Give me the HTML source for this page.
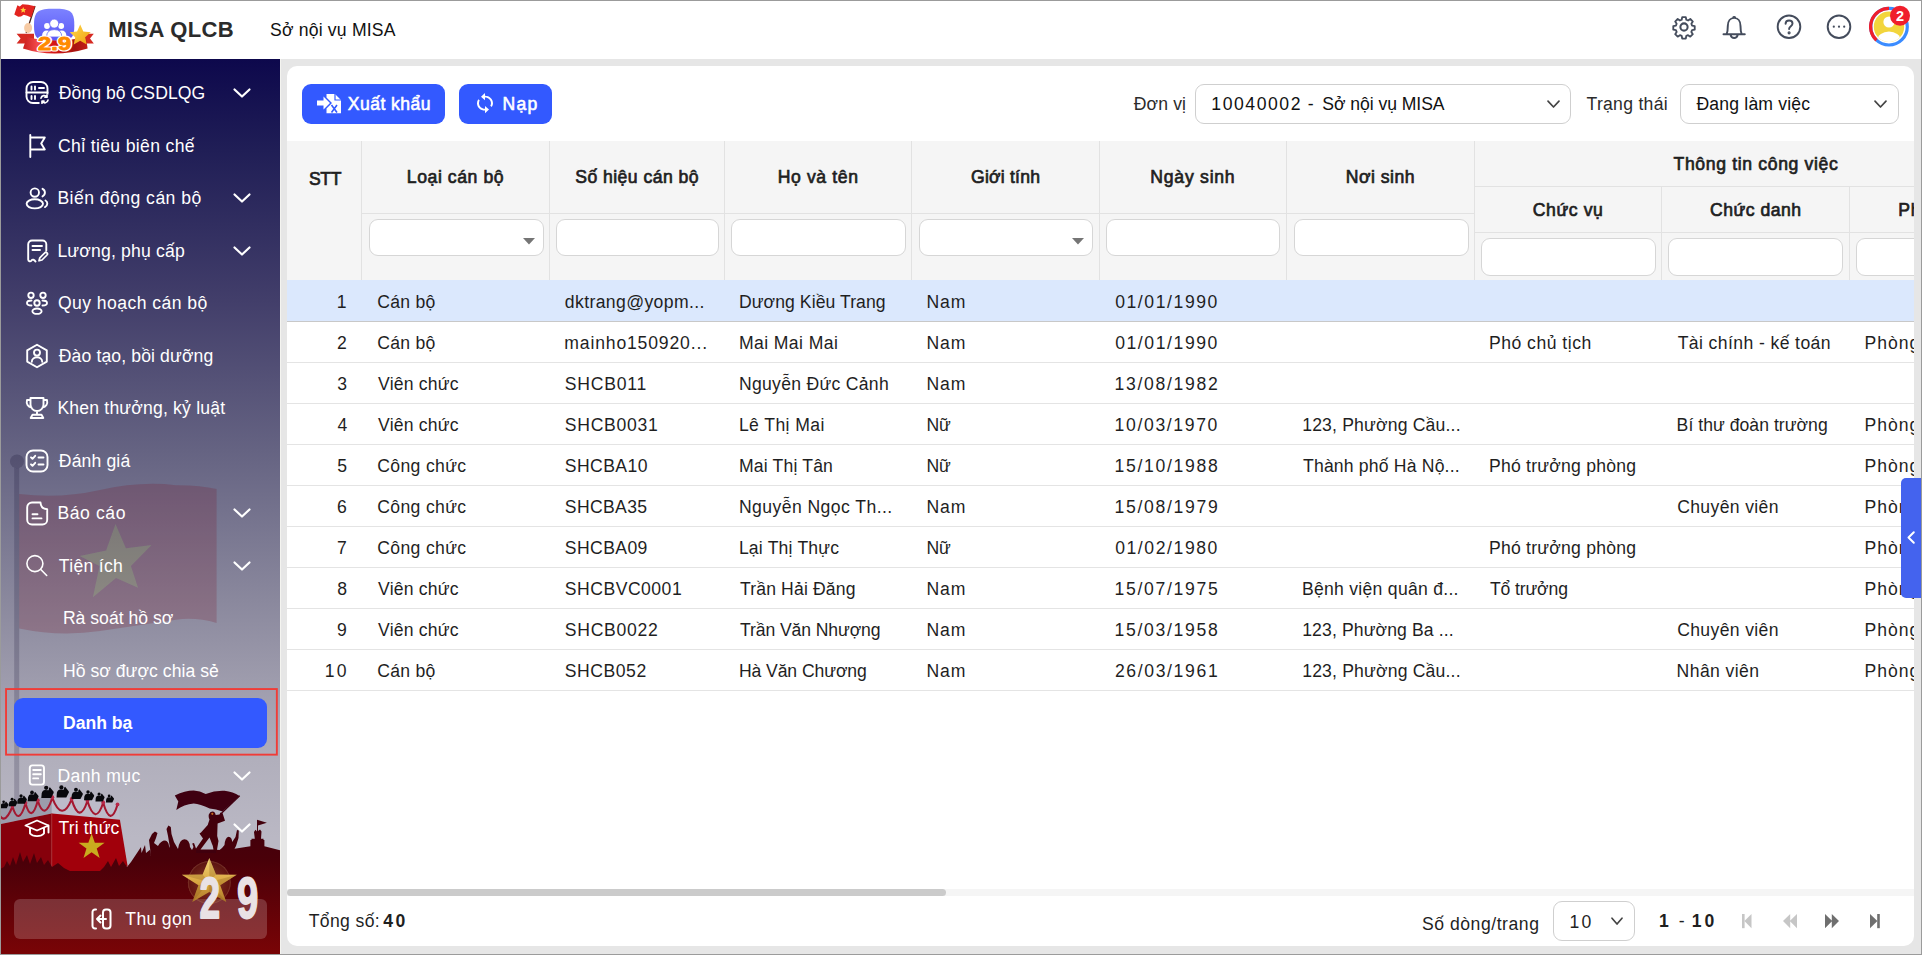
<!DOCTYPE html>
<html lang="vi">
<head>
<meta charset="utf-8">
<title>MISA QLCB</title>
<style>
*{box-sizing:border-box;margin:0;padding:0}
html,body{width:1922px;height:955px;overflow:hidden;background:#e6e6e6}
body{font-family:"Liberation Sans",sans-serif;color:#1f1f1f;position:relative;font-size:17.6px}
#frame{position:absolute;left:0;top:0;width:1922px;height:955px;border:1px solid #9b9b9b;z-index:50;pointer-events:none}
#hdr{position:absolute;left:1px;top:1px;width:1920px;height:58px;background:#fff}
#side{position:absolute;left:1px;top:59px;width:279px;height:895px;overflow:hidden;
 background:linear-gradient(180deg,#0d084c 0%,#201e56 10.17%,#423e6a 26.93%,#656382 43.69%,#8a889d 60.45%,#b1afbc 78.32%,#bab8c4 87%)}
#sline{position:absolute;left:280px;top:59px;width:1px;height:895px;background:#f4f4f0}
#card{position:absolute;left:287px;top:66px;width:1627px;height:880px;background:#fff;border-radius:10px;overflow:hidden}
.t{position:absolute;white-space:nowrap;line-height:20px}
.b{font-weight:700}
svg{position:absolute;overflow:visible}
/* sidebar (coords relative to #side: x-1, y-59) */
.mi{position:absolute;left:57px;color:#fff;font-size:17.6px;white-space:nowrap;line-height:22px;height:22px}
.ic{position:absolute;left:22px;width:26px;height:26px;fill:none;stroke:#fff;stroke-width:1.9;stroke-linecap:round;stroke-linejoin:round}
.cv{position:absolute;left:232px;width:18px;height:10px;fill:none;stroke:#fff;stroke-width:2.2;stroke-linecap:round;stroke-linejoin:round}
/* table (coords relative to #card: x-287, y-66) */
#th{position:absolute;left:0;top:75px;width:1627px;height:139px;background:#f5f5f5}
.vl{position:absolute;width:1px;background:#e2e2e2}
.hl{position:absolute;height:1px;background:#e2e2e2}
.hc{position:absolute;text-align:center;font-weight:700;font-size:17.6px;line-height:20px;white-space:nowrap;color:#1f1f1f}
.fi{position:absolute;height:37px;background:#fff;border:1px solid #d6d6d6;border-radius:9px}
.row{position:absolute;left:0;width:1627px;height:41px;border-bottom:1px solid #e4e4e4;background:#fff}
.row.sel{background:#dbe8fd;border-bottom-color:#c8c8c8}
.c{position:absolute;top:10.8px;white-space:nowrap;line-height:20px;font-size:17.6px;color:#1f1f1f}
.row.sel .c{top:11.8px}
.n{letter-spacing:1.35px}
.sel2{position:absolute;background:#fff;border:1px solid #cfcfcf;border-radius:9px}
</style>
</head>
<body>
<div id="hdr">
<!-- logo: coords are page coords minus (1,1) -> use svg positioned at -1,-1 -->
<svg style="left:-1px;top:-1px" width="110" height="60" viewBox="0 0 110 60">
<defs>
<linearGradient id="lgb" x1="0" y1="0" x2="0" y2="1"><stop offset="0" stop-color="#7c82ff"/><stop offset="1" stop-color="#5a58f6"/></linearGradient>
<linearGradient id="lgr" x1="0" y1="0" x2="1" y2="0"><stop offset="0" stop-color="#c91d1d"/><stop offset=".22" stop-color="#f24a4a"/><stop offset=".45" stop-color="#d81616"/><stop offset=".8" stop-color="#a81410"/><stop offset="1" stop-color="#c42018"/></linearGradient>
<linearGradient id="lgs" x1="0" y1="0" x2="1" y2="1"><stop offset="0" stop-color="#ffd84a"/><stop offset="1" stop-color="#f0a010"/></linearGradient>
</defs>
<!-- ribbon tails -->
<path d="M16.6 33.8H34V43.4H16.6L20.6 38.6Z" fill="#d62a22"/>
<path d="M84 33.8H93.8L90 38.6L93.8 43.4H84Z" fill="#d62a22"/>
<!-- flag pole + flag -->
<path d="M35 6L26.2 33" stroke="#4a2418" stroke-width="1.3"/>
<path d="M14.3 14.4L17.4 5.2L19.8 6.6L22.4 4.2Q28 4.4 35 6.3L31.2 17.6Q27 15.2 23.7 14.8L21 16.4L18.2 16.8Z" fill="#e3241f"/>
<path d="M23.2 7.1l.9 1.9 2.1.2-1.6 1.4.5 2.1-1.9-1.1-1.8 1.1.4-2.1-1.6-1.4 2.1-.2z" fill="#ffd23a"/>
<ellipse cx="28.1" cy="28" rx="4" ry="5" fill="#f7cba4"/>
<!-- blue squircle -->
<path d="M54.2 8.8C70 8.8 74.3 11 74.3 24.8C74.3 38.6 72 40.8 54.2 40.8C36.4 40.8 34 38.6 34 24.8C34 11 38.4 8.8 54.2 8.8Z" fill="url(#lgb)"/>
<circle cx="47" cy="26" r="2.9" fill="#fff"/><circle cx="61.2" cy="26" r="2.9" fill="#fff"/>
<path d="M42 36.5Q42 30.6 47 30.6Q50 30.6 51 32.5L49 36.5Z" fill="#fff"/>
<path d="M66.4 36.5Q66.4 30.6 61.4 30.6Q58.4 30.6 57.4 32.5L59.4 36.5Z" fill="#fff"/>
<circle cx="54.2" cy="23.6" r="4.5" fill="#fff" stroke="#6c6cfa" stroke-width=".8"/>
<path d="M46.6 37Q46.6 29.6 54.2 29.6Q61.8 29.6 61.8 37Z" fill="#fff" stroke="#6266f8" stroke-width=".8"/>
<!-- main ribbon -->
<path d="M26.8 37Q54 44 86 37L87.6 48.4Q54 58.5 23 48.4Z" fill="url(#lgr)"/>
<!-- star -->
<path d="M80.2 24.6l3.1 6.8 7.4.8-5.5 5 1.5 7.3-6.5-3.7-6.5 3.7 1.5-7.3-5.5-5 7.4-.8z" fill="url(#lgs)"/>
<!-- 2.9 -->
<text x="54.600" y="50" text-anchor="middle" font-family="Liberation Sans" font-weight="700" font-size="17.500" fill="#fff" stroke="#fff" stroke-width="3" stroke-linejoin="round" textLength="33" lengthAdjust="spacingAndGlyphs">2.9</text>
<text x="54.600" y="50" text-anchor="middle" font-family="Liberation Sans" font-weight="700" font-size="17.500" fill="#ff8a00" stroke="#ff8a00" stroke-width=".800" stroke-linejoin="round" textLength="33" lengthAdjust="spacingAndGlyphs">2.9</text>
</svg>
<div class="t b" style="left:107.200px;top:16px;font-size:22px;line-height:26px;color:#2b2b2b;letter-spacing:.36px">MISA QLCB</div>
<div class="t" style="left:269px;top:17.500px;font-size:17.600px;line-height:22px;color:#111;letter-spacing:.19px">Sở nội vụ MISA</div>
<!-- right icons (page coords -1) -->
<svg style="left:1669px;top:12px" width="28" height="28" viewBox="0 0 24 24" fill="none" stroke="#444c5c" stroke-width="1.750" stroke-linecap="round" stroke-linejoin="round">
<path d="M10.3 2.6h3.4l.5 2.5 1.7.7 2.1-1.4 2.4 2.4-1.4 2.1.7 1.7 2.5.5v3.4l-2.5.5-.7 1.7 1.4 2.1-2.4 2.4-2.1-1.4-1.7.7-.5 2.5h-3.4l-.5-2.5-1.7-.7-2.1 1.4-2.4-2.4 1.4-2.1-.7-1.7-2.5-.5v-3.4l2.5-.5.7-1.7-1.400-2.1 2.400-2.400 2.100 1.400 1.700-.7z" transform="translate(1.2 1.2) scale(.9)"/>
<circle cx="12" cy="12" r="3.1"/>
</svg>
<svg style="left:1719px;top:12px" width="28" height="30" viewBox="0 0 28 30" fill="none" stroke="#444c5c" stroke-width="1.950" stroke-linecap="round" stroke-linejoin="round">
<path d="M3.500 21.200H24.800M6.600 21.200C7.600 19 7.800 16 7.800 13C7.800 8 10.500 4.900 14.150 4.900C17.800 4.900 20.500 8 20.500 13C20.500 16 20.700 19 21.700 21.200M10.700 22.300a3.550 3.550 0 0 0 6.900 0M13.100 4.700a1.100 1.100 0 0 1 2.100 0"/>
</svg>

<svg style="left:1774px;top:12px" width="28" height="28" viewBox="0 0 28 28" fill="none" stroke="#444c5c" stroke-width="1.950" stroke-linecap="round" stroke-linejoin="round">
<circle cx="14" cy="13.700" r="11.300"/>
<path d="M10.600 10.800c0-2 1.500-3.300 3.500-3.300s3.400 1.300 3.400 3c0 2.600-3.400 2.700-3.400 5.400"/><circle cx="14.100" cy="19.800" r=".6" fill="#444c5c"/>
</svg>
<svg style="left:1824px;top:12px" width="28" height="28" viewBox="0 0 28 28" fill="none" stroke="#444c5c" stroke-width="1.950">
<circle cx="14" cy="13.700" r="11.300"/>
<g fill="#444c5c" stroke="none"><circle cx="8.800" cy="13.700" r="1.100"/><circle cx="14" cy="13.700" r="1.100"/><circle cx="19.200" cy="13.700" r="1.100"/></g>
</svg>
<!-- avatar -->
<svg style="left:1866px;top:4px" width="44" height="44" viewBox="0 0 44 44">
<circle cx="22" cy="21.700" r="18.300" fill="none" stroke="#3b8cff" stroke-width="3.200"/>
<path d="M22 3.400A18.300 18.300 0 0 0 9.500 35.200" fill="none" stroke="#f01e2c" stroke-width="3.200"/>
<circle cx="22" cy="21.700" r="15.200" fill="#f2d53c"/>
<clipPath id="avc"><circle cx="22" cy="21.700" r="15.200"/></clipPath>
<g clip-path="url(#avc)" fill="#fff"><circle cx="22" cy="17" r="5.600"/><ellipse cx="22" cy="35" rx="11.500" ry="8.600"/></g>
<circle cx="33" cy="10.700" r="10" fill="#f01e2c"/>
<text x="33" y="16" text-anchor="middle" font-family="Liberation Sans" font-weight="700" font-size="14.500" fill="#fff">2</text>
</svg>
</div>
<div id="side">
<svg style="left:-1px;top:-59px" width="281" height="955" viewBox="0 0 281 955">
<defs>
<linearGradient id="gnd" x1="0" y1="0" x2="0" y2="1"><stop offset="0" stop-color="#40000d"/><stop offset=".35" stop-color="#4a0009"/><stop offset="1" stop-color="#7a0406"/></linearGradient>
</defs>
<!-- flagpole -->
<circle cx="17" cy="461.400" r="7" fill="#0a0528" fill-opacity=".2"/>
<path d="M14.200 467.800Q16.700 468.800 19.200 467.800V822H14.200Z" fill="#0a0528" fill-opacity=".19"/>
<!-- ghost flag (star cut out) + star -->
<path fill-rule="evenodd" d="M19.200 494Q60 499 100 490T176 485.200Q200 485 216.600 489V623Q196 617 176 619.700Q140 625 100 631T19.200 628.500Z M115.500 524.100L125.900 548.300 151.600 545 130.900 565.900 138 587.800 116 578 92.900 597.300 99.500 565.900 79.700 556 106.100 550.500Z" fill="#78081e" fill-opacity=".2"/>
<path d="M115.500 524.100L125.900 548.300 151.600 545 130.900 565.900 138 587.800 116 578 92.900 597.300 99.500 565.900 79.700 556 106.100 550.500Z" fill="#929000" fill-opacity=".17"/>
<!-- podium -->
<path d="M1 805.100L51.800 795.700V813.500L1 824Z" fill="#9c9cab"/>
<path d="M51.800 795.700L118.800 802.500 119.900 819.800 51.800 813.500Z" fill="#bdbbc9"/>
<path d="M1 824L51.800 813.500V871H1Z" fill="#86000b"/>
<path d="M51.800 813.500L119.900 819.800 127.600 866 120 871H51.800Z" fill="#a1000b"/>
<path d="M51.800 813.500V871" stroke="#b4383c" stroke-width=".7"/>
<path d="M91.600 833.400l3.250 9.250h9.750l-7.850 5.900 2.950 9.450-8.100-5.800-8.100 5.800 2.950-9.450-7.850-5.900h9.750z" fill="#c9ab1f"/>
<!-- garland -->
<g fill="none" stroke="#a41830" stroke-width="2.100" stroke-linecap="round">
<path d="M-3 808Q3 830 12.500 806.500Q18.500 827 25.500 803.500Q31.500 824 37.800 800.800Q44.500 822 52.300 797.800Q62 823 71.600 799.400Q79.500 825 87.400 801Q95.500 826.500 103.200 802.800Q110.500 828 117.500 804.800"/>
</g>
<g fill="#b82848"><circle cx="12.500" cy="806" r="1.900"/><circle cx="25.500" cy="803" r="1.900"/><circle cx="37.800" cy="800.300" r="1.900"/><circle cx="52.300" cy="797.300" r="2"/><circle cx="71.600" cy="799" r="1.900"/><circle cx="87.400" cy="800.600" r="1.900"/><circle cx="103.200" cy="802.400" r="1.900"/><circle cx="117.500" cy="804.400" r="1.900"/></g>
<!-- soldiers -->
<g fill="#0d0d12">
<g id="sol"><circle cx="-.600" cy="-10" r="2.150"/><path d="M-5.600 .300L-5.200 -4.500Q-4.500 -7.600 -1.800 -7.800L1.800 -7.600 2.300 -9.800 3.200 -10.600 7 -5.900Q7.300 -4.800 6.300 -3.400L4.400 .300Z"/></g>
</g>
<g fill="#08080c">
<use href="#sol" transform="translate(4 808) scale(.62)"/>
<use href="#sol" transform="translate(12.500 806) scale(.68)"/>
<use href="#sol" transform="translate(21.500 803.600) scale(.76)"/>
<use href="#sol" transform="translate(32.500 801) scale(.86)"/>
<use href="#sol" transform="translate(46.800 797.600) scale(.98)"/>
<use href="#sol" transform="translate(62 797.200) scale(.98)"/>
<use href="#sol" transform="translate(76.500 798.800) scale(.9)"/>
<use href="#sol" transform="translate(88.500 800) scale(.8)"/>
<use href="#sol" transform="translate(99.500 801.200) scale(.72)"/>
<use href="#sol" transform="translate(109.500 802.300) scale(.64)"/>
</g>
<!-- ground + crowd -->
<path d="M0 869L4 867 7 861 10 866 13 857 16 865 20 852 23 862 27 855 30 864 34 853 37 863 41 857 44 865 48 860 52 867 58 863 64 868 70 871H100L104 867 108 861 111 867 116 858 119 866 123 861 127 867
 L131 862 135 856 139 850 141 847 141.500 853 145 845 146 853 150 849.700 151 856
 L149 840 152 834 154.900 831.500 157.500 833 156 838 154 843 158 846 Q161 840.500 165 840.500 Q168.500 841 169 846 L170 848
 L168 836 166.500 829 168.400 825.500 170.800 827 171.500 834 174 842 178 849
 Q179.500 839.500 184.300 839.300 Q189.500 839.500 190 847 L192 850 193.500 847 192.200 843.500 194 843 196 848.500
 L203 838.500 199.500 833.500 201 832.500 207.700 825 209.500 819.500
 Q208.300 817.500 208.800 814.500 Q210 811.300 212.500 811.400 Q215.300 811.700 215.700 815 L219.500 814.500 220.600 812.500 222.600 813.200 225 820.800 217.600 823.500 217.200 836 218.500 841 217 849.700
 L219.500 850 222 848 224.500 845 Q225 837.500 228.600 836.700 Q232 837.200 232.200 842 L235.500 837 237 830 238.800 830.400 238.500 838 236 846 234.500 848.700
 L250.400 846.200V840H251.500V838.700H254.800L254 832 255.500 829.800 257 831.500V819.800L266.900 822.800 258 825.500V831L260 829.500 261.500 831.500 261 838.700H263.500V840H264.400V846.200
 L281 850.500V955H0Z" fill="url(#gnd)"/>
<path d="M200.500 849.500L209.500 837.500 212.800 846 213.500 849.500Z" fill="#b9b7c4"/>
<path d="M196 850h20v3h-20z" fill="#40000d"/>
<!-- big flag + pole -->
<path d="M174.800 795.400Q185 790.500 193.700 790.400Q200 790.800 205.700 793.900Q215 790.200 224.600 790.700Q233 791.500 239.500 795.900L222.600 811.500Q216 809 209.700 808.400Q200 804 193.700 803.400Q184 804 176.300 809.900L178.300 801.400Z" fill="#3f0011"/>
<path d="M239.700 795.700L220.200 814.500" stroke="#3f0011" stroke-width="1.200"/>
<circle cx="212.300" cy="813.800" r="1.100" fill="#c86a20"/>
</svg>

<div class="mi" style="left:57.8px;top:23px;letter-spacing:0.05px">Đồng bộ CSDLQG</div>
<svg class="ic" style="left:22.600px;top:21.3px" viewBox="0 0 26 26"><rect x="2.5" y="2" width="21" height="21" rx="6.5"/><path d="M2.500 12.500h21M7.500 6.500v3M11 6.500v3M15 8h5M7.500 16v3M11 16v3" /><rect x="15.500" y="14.500" width="10" height="10" fill="#1a1555" stroke="none"/><path d="M17 18.200a3.200 3.200 0 0 1 5.800-1.200M24 20.200a3.200 3.200 0 0 1-5.800 1.200M23 15.200v2h-2M18 23.200v-2h2" stroke-width="1.700"/></svg>
<svg class="cv" style="top:29.0px" viewBox="0 0 18 10"><path d="M1.500 1.500L9 8.500l7.500-7"/></svg>
<div class="mi" style="left:56.97px;top:76px;letter-spacing:0.349px">Chỉ tiêu biên chế</div>
<svg class="ic" style="left:22.600px;top:73.8px" viewBox="0 0 26 26"><path d="M6.300 2v22M6.300 4.500h14.500l-3.600 6 3.600 6H6.300"/></svg>
<div class="mi" style="left:56.42px;top:128px;letter-spacing:0.459px">Biến động cán bộ</div>
<svg class="ic" style="left:22.600px;top:126.3px" viewBox="0 0 26 26"><circle cx="10.800" cy="7.600" r="4.200"/><ellipse cx="10.800" cy="18.800" rx="8.200" ry="4.600"/><path d="M18.500 3.800a4.200 4.200 0 0 1 0 7.600M21.500 15.500c2.500 1.200 2.500 5.400-.5 6.600"/></svg>
<svg class="cv" style="top:134.0px" viewBox="0 0 18 10"><path d="M1.500 1.500L9 8.500l7.500-7"/></svg>
<div class="mi" style="left:56.42px;top:181px;letter-spacing:0.176px">Lương, phụ cấp</div>
<svg class="ic" style="left:22.600px;top:178.8px" viewBox="0 0 26 26"><path d="M11.500 23.500c-1.200-2-3-2.500-4.200-.8-.8 1.100-3.100.8-3.100-1.200V6.300a3.800 3.800 0 0 1 3.800-3.800h10.500a3.800 3.800 0 0 1 3.800 3.800v6.200M8.500 8h9.500M8.500 12h7.500"/><path d="M15 22.800l.8-3 5-5a1.500 1.500 0 0 1 2.200 2.200l-5 5z" stroke-width="1.700"/></svg>
<svg class="cv" style="top:186.5px" viewBox="0 0 18 10"><path d="M1.500 1.500L9 8.500l7.500-7"/></svg>
<div class="mi" style="left:56.97px;top:233px;letter-spacing:0.432px">Quy hoạch cán bộ</div>
<svg class="ic" style="left:22.600px;top:231.3px" viewBox="0 0 26 26"><circle cx="7" cy="5.300" r="2.700"/><circle cx="19" cy="5.300" r="2.700"/><circle cx="13" cy="13" r="2.700"/><ellipse cx="13" cy="21.200" rx="4.600" ry="2.700"/><path d="M7.500 10.500c-6 0-6 5 0 5M18.500 10.500c6 0 6 5 0 5"/></svg>
<div class="mi" style="left:57.8px;top:286px;letter-spacing:0.118px">Đào tạo, bồi dưỡng</div>
<svg class="ic" style="left:22.600px;top:283.8px" viewBox="0 0 26 26"><path d="M13 1.800l9.800 5.600v11.200L13 24.200l-9.800-5.600V7.400z"/><circle cx="13" cy="9.600" r="3"/><path d="M7.800 18.800c0-6 10.400-6 10.400 0"/></svg>
<div class="mi" style="left:56.42px;top:338px;letter-spacing:0.184px">Khen thưởng, kỷ luật</div>
<svg class="ic" style="left:22.600px;top:336.3px" viewBox="0 0 26 26"><path d="M6.500 3h13v6.500a6.500 6.500 0 0 1-13 0zM6.500 5H3c-1 4 1 7 4.500 7.500M19.500 5H23c1 4-1 7-4.500 7.500M13 16v3.500M8.500 19.800h9l1.800 3.200h-12.600z"/></svg>
<div class="mi" style="left:57.8px;top:391px;letter-spacing:0.134px">Đánh giá</div>
<svg class="ic" style="left:22.600px;top:388.8px" viewBox="0 0 26 26"><rect x="2.500" y="2.500" width="21" height="21" rx="6.500"/><path d="M7 9.300l1.500 1.500 2.700-3M14.500 9.500h5M7 16.300l1.500 1.500 2.700-3M14.500 16.500h5"/></svg>
<div class="mi" style="left:56.42px;top:443px;letter-spacing:0.584px">Báo cáo</div>
<svg class="ic" style="left:22.600px;top:441.3px" viewBox="0 0 26 26"><path d="M16.500 2.500H8a4.800 4.800 0 0 0-4.800 4.800v12.400A4.800 4.800 0 0 0 8 24.500h10.400a4.800 4.800 0 0 0 4.800-4.800V9.200M16.500 2.500c.2 4.500 2.200 6.500 6.700 6.700M8.500 14.300h5M8.500 18.400h9"/></svg>
<svg class="cv" style="top:449.0px" viewBox="0 0 18 10"><path d="M1.500 1.500L9 8.500l7.500-7"/></svg>
<div class="mi" style="left:57.83px;top:496px;letter-spacing:0.287px">Tiện ích</div>
<svg class="ic" style="left:22.600px;top:493.8px" viewBox="0 0 26 26"><circle cx="10.900" cy="10.600" r="8" stroke-width="1.600"/><path d="M16.800 16.500l5.900 6" stroke-width="1.600"/></svg>
<svg class="cv" style="top:501.5px" viewBox="0 0 18 10"><path d="M1.500 1.500L9 8.500l7.500-7"/></svg>
<div class="mi" style="left:61.92px;top:548px;letter-spacing:0.007px">Rà soát hồ sơ</div>
<div class="mi" style="left:61.92px;top:601px;letter-spacing:0.047px">Hồ sơ được chia sẻ</div>
<svg style="left:0;top:620px" width="279" height="90" viewBox="0 620 279 90"><rect x="5.050" y="630.050" width="270.800" height="65.600" fill="none" stroke="#f03c38" stroke-width="1.900"/></svg>
<div style="position:absolute;left:13px;top:639px;width:253px;height:50px;background:#3359ff;border-radius:9px"></div>
<div class="mi b" style="left:62.0px;top:653px;letter-spacing:-0.007px">Danh bạ</div>
<div class="mi" style="left:56.42px;top:706px;letter-spacing:0.391px">Danh mục</div>
<svg class="ic" style="left:22.600px;top:703.8px" viewBox="0 0 26 26"><rect x="5.800" y="2.400" width="14.200" height="19.200" rx="2.600"/><path d="M9.200 7h7.600M9.200 11.200h7.600M9.200 15.400h5"/></svg>
<svg class="cv" style="top:711.5px" viewBox="0 0 18 10"><path d="M1.500 1.500L9 8.500l7.500-7"/></svg>
<div class="mi" style="left:57.52px;top:758px;letter-spacing:0.119px">Tri thức</div>
<svg class="ic" style="left:22.600px;top:756.3px" viewBox="0 0 26 26"><path d="M13 5.500L1.500 10.500 13 15.500l11.500-5zM6 13v5.500c3 3.500 11 3.500 14 0V13M24.500 10.500v7"/></svg>
<svg class="cv" style="top:764.0px" viewBox="0 0 18 10"><path d="M1.500 1.500L9 8.500l7.500-7"/></svg>
<div style="position:absolute;left:13px;top:840px;width:253px;height:40px;background:rgba(255,255,255,.19);border-radius:6px"></div>
<svg style="left:89px;top:848px;fill:none;stroke:#fff;stroke-width:2;stroke-linecap:round;stroke-linejoin:round" width="24" height="24" viewBox="0 0 24 24"><path d="M6 2.500H5a2.500 2.500 0 0 0-2.500 2.500v14A2.500 2.500 0 0 0 5 21.500h1M16 2.500h1.500a3 3 0 0 1 3 3v13a3 3 0 0 1-3 3H16a3 3 0 0 1-3-3v-13a3 3 0 0 1 3-3zM7 12h9M10.500 8.500L7 12l3.500 3.500" /></svg>
<div class="mi" style="left:124.32px;top:849.400px;letter-spacing:0.33px">Thu gọn</div>
<svg style="left:-1px;top:-59px" width="281" height="955" viewBox="0 0 281 955">
<defs>
<linearGradient id="gst" x1="0" y1="0" x2="0" y2="1"><stop offset="0" stop-color="#f3d77a"/><stop offset=".55" stop-color="#d9a640"/><stop offset="1" stop-color="#b07a2a"/></linearGradient>
<radialGradient id="glow"><stop offset="0" stop-color="#b98a55" stop-opacity=".5"/><stop offset=".93" stop-color="#8a4a28" stop-opacity=".28"/><stop offset="1" stop-color="#c89a6a" stop-opacity=".4"/></radialGradient>
</defs>
<circle cx="209.300" cy="882.500" r="21.400" fill="url(#glow)"/>
<path d="M209.3 858.0 L216.0 874.5 L236.8 874.8 L220.2 885.3 L226.3 902.0 L209.3 891.9 L192.3 902.0 L198.4 885.3 L181.8 874.8 L202.6 874.5Z" fill="url(#gst)"/>
<path d="M209.3 882.3L209.3 858.0L216.0 874.5Z M209.3 882.3L236.8 874.8L220.2 885.3Z M209.3 882.3L226.3 902.0L209.3 891.9Z M209.3 882.3L192.3 902.0L198.4 885.3Z M209.3 882.3L181.8 874.8L202.6 874.5Z" fill="#8a5a18" fill-opacity=".28"/>
<g font-family="Liberation Sans" font-weight="700" font-size="58" fill="#e9e2e5" stroke="#e9e2e5" stroke-width="1.800" stroke-linejoin="round">
<text transform="translate(199.400 917.600) scale(.64 1)">2</text>
<text transform="translate(237 917.600) scale(.66 1)">9</text>
</g>
</svg>

</div>
<div id="card">
<div style="position:absolute;left:15px;top:18px;width:143px;height:40px;background:#3359ff;border-radius:9px"></div>
<svg style="left:29px;top:27px" width="26" height="22" viewBox="0 0 26 22"><path d="M1 7.500h6.500V3.500L14 10l-6.500 6.500v-4H1z" fill="#fff"/><path d="M10.500 1H19l6 6v13.200H10.500v-4.700l5.500-5.500-5.500-5.500z" fill="#fff"/><path d="M19 1v6h6" fill="none" stroke="#3359ff" stroke-width="1.200"/><path d="M15.500 12l5.500 7.500M21 12L15.500 19.500" stroke="#3359ff" stroke-width="1.600" fill="none"/></svg>
<div class="t" style="left:60.83px;top:27.6px;letter-spacing:0.425px;color:#fff;-webkit-text-stroke:.55px #fff;">Xuất khẩu</div>
<div style="position:absolute;left:172px;top:18px;width:93px;height:40px;background:#3359ff;border-radius:9px"></div>
<svg style="left:186.200px;top:26.300px" width="24" height="22.250" viewBox="0 0 24 24" preserveAspectRatio="none" fill="#fff"><path d="M12 4V1L8 5l4 4V6c3.310 0 6 2.690 6 6 0 1.010-.25 1.970-.7 2.800l1.460 1.460A7.930 7.930 0 0 0 20 12c0-4.420-3.580-8-8-8zm0 14c-3.310 0-6-2.690-6-6 0-1.010.25-1.970.7-2.800L5.240 7.740A7.930 7.930 0 0 0 4 12c0 4.420 3.580 8 8 8v3l4-4-4-4v3z"/></svg>
<div class="t" style="left:215.62px;top:27.6px;letter-spacing:1.201px;color:#fff;-webkit-text-stroke:.55px #fff;">Nạp</div>
<div class="t" style="left:846.7px;top:27.9px;letter-spacing:0.144px;color:#2b2b2b;">Đơn vị</div>
<div class="sel2" style="left:908.400px;top:18.400px;width:375.400px;height:39.200px"></div>
<div class="t" style="left:924.3px;top:27.9px;letter-spacing:1.558px;color:#111;">10040002</div>
<div class="t" style="left:1020.75px;top:27.9px;letter-spacing:0px;color:#111;">-</div>
<div class="t" style="left:1035.25px;top:27.9px;letter-spacing:-0.053px;color:#111;">Sở nội vụ MISA</div>
<svg style="left:1259.600px;top:34px" width="13" height="8.500" viewBox="0 0 13 8.500" fill="none" stroke="#444" stroke-width="1.700" stroke-linecap="round" stroke-linejoin="round"><path d="M1 1.200L6.500 7l5.500-5.800"/></svg>
<div class="t" style="left:1299.52px;top:27.7px;letter-spacing:0.283px;color:#2b2b2b;">Trạng thái</div>
<div class="sel2" style="left:1393.300px;top:18.200px;width:218.500px;height:39.500px"></div>
<div class="t" style="left:1409.4px;top:27.7px;letter-spacing:0.189px;color:#111;">Đang làm việc</div>
<svg style="left:1587.400px;top:34.300px" width="13" height="8.500" viewBox="0 0 13 8.500" fill="none" stroke="#444" stroke-width="1.700" stroke-linecap="round" stroke-linejoin="round"><path d="M1 1.200L6.500 7l5.500-5.800"/></svg>
<div id="th"></div>
<div class="vl" style="left:74px;top:75px;height:139px"></div>
<div class="vl" style="left:262px;top:75px;height:139px"></div>
<div class="vl" style="left:437px;top:75px;height:139px"></div>
<div class="vl" style="left:624px;top:75px;height:139px"></div>
<div class="vl" style="left:812px;top:75px;height:139px"></div>
<div class="vl" style="left:999px;top:75px;height:139px"></div>
<div class="vl" style="left:1187px;top:75px;height:139px"></div>
<div class="vl" style="left:1374px;top:120px;height:94px"></div>
<div class="vl" style="left:1562px;top:120px;height:94px"></div>
<div class="hl" style="left:74px;top:147px;width:1113px"></div>
<div class="hl" style="left:1187px;top:120px;width:440px"></div>
<div class="hl" style="left:1187px;top:166px;width:440px"></div>
<div class="t" style="left:21.89px;top:102.8px;letter-spacing:-0.335px;-webkit-text-stroke:.68px #1f1f1f;">STT</div>
<div class="t" style="left:119.86px;top:101.1px;letter-spacing:0.57px;-webkit-text-stroke:.68px #1f1f1f;">Loại cán bộ</div>
<div class="fi" style="left:82px;width:175px;top:153.3px;height:36.400px"></div>
<svg style="left:235.5px;top:171.5px" width="12" height="6.600" viewBox="0 0 12 6.600"><path d="M0 0h12L6 6.600z" fill="#757575"/></svg>
<div class="t" style="left:288.19px;top:101.1px;letter-spacing:0.458px;-webkit-text-stroke:.68px #1f1f1f;">Số hiệu cán bộ</div>
<div class="fi" style="left:269px;width:163px;top:153.3px;height:36.400px"></div>
<div class="t" style="left:490.67px;top:101.1px;letter-spacing:0.631px;-webkit-text-stroke:.68px #1f1f1f;">Họ và tên</div>
<div class="fi" style="left:444px;width:175px;top:153.3px;height:36.400px"></div>
<div class="t" style="left:684.01px;top:101.1px;letter-spacing:0.217px;-webkit-text-stroke:.68px #1f1f1f;">Giới tính</div>
<div class="fi" style="left:632px;width:174px;top:153.3px;height:36.400px"></div>
<svg style="left:784.5px;top:171.5px" width="12" height="6.600" viewBox="0 0 12 6.600"><path d="M0 0h12L6 6.600z" fill="#757575"/></svg>
<div class="t" style="left:863.37px;top:101.1px;letter-spacing:0.752px;-webkit-text-stroke:.68px #1f1f1f;">Ngày sinh</div>
<div class="fi" style="left:819px;width:174px;top:153.3px;height:36.400px"></div>
<div class="t" style="left:1058.87px;top:101.1px;letter-spacing:0.478px;-webkit-text-stroke:.68px #1f1f1f;">Nơi sinh</div>
<div class="fi" style="left:1007px;width:175px;top:153.3px;height:36.400px"></div>
<div class="t" style="left:1386.56px;top:87.8px;letter-spacing:0.647px;-webkit-text-stroke:.68px #1f1f1f;">Thông tin công việc</div>
<div class="t" style="left:1245.81px;top:134.2px;letter-spacing:0.596px;-webkit-text-stroke:.68px #1f1f1f;">Chức vụ</div>
<div class="t" style="left:1423.01px;top:134.2px;letter-spacing:0.489px;-webkit-text-stroke:.68px #1f1f1f;">Chức danh</div>
<div class="t" style="left:1611.37px;top:134.2px;letter-spacing:0.592px;-webkit-text-stroke:.68px #1f1f1f;">Phòng ban</div>
<div class="fi" style="left:1194px;width:175px;top:172.3px;height:37.400px"></div>
<div class="fi" style="left:1381px;width:175px;top:172.3px;height:37.400px"></div>
<div class="fi" style="left:1569px;width:174px;top:172.3px;height:37.400px"></div>
<div class="row sel" style="top:214px;height:42px;padding-top:1px">
<div class="c" style="left:49.7px;letter-spacing:0px">1</div>
<div class="c" style="left:90.28px;letter-spacing:0.277px">Cán bộ</div>
<div class="c" style="left:277.85px;letter-spacing:0.376px">dktrang@yopm...</div>
<div class="c" style="left:451.92px;letter-spacing:0.075px">Dương Kiều Trang</div>
<div class="c" style="left:639.52px;letter-spacing:0.813px">Nam</div>
<div class="c" style="left:828.15px;letter-spacing:1.578px">01/01/1990</div>
</div>
<div class="row" style="top:256px">
<div class="c" style="left:49.98px;letter-spacing:0px">2</div>
<div class="c" style="left:90.28px;letter-spacing:0.277px">Cán bộ</div>
<div class="c" style="left:277.3px;letter-spacing:0.833px">mainho150920...</div>
<div class="c" style="left:451.92px;letter-spacing:0.408px">Mai Mai Mai</div>
<div class="c" style="left:639.52px;letter-spacing:0.813px">Nam</div>
<div class="c" style="left:828.15px;letter-spacing:1.578px">01/01/1990</div>
<div class="c" style="left:1201.92px;letter-spacing:0.5px">Phó chủ tịch</div>
<div class="c" style="left:1390.72px;letter-spacing:0.394px">Tài chính - kế toán</div>
<div class="c" style="left:1577.42px;letter-spacing:0.993px">Phòng</div>
</div>
<div class="row" style="top:297px">
<div class="c" style="left:50.25px;letter-spacing:0px">3</div>
<div class="c" style="left:91.1px;letter-spacing:0.176px">Viên chức</div>
<div class="c" style="left:277.85px;letter-spacing:0.734px">SHCB011</div>
<div class="c" style="left:451.92px;letter-spacing:0.29px">Nguyễn Đức Cảnh</div>
<div class="c" style="left:639.52px;letter-spacing:0.813px">Nam</div>
<div class="c" style="left:827.6px;letter-spacing:1.67px">13/08/1982</div>
</div>
<div class="row" style="top:338px">
<div class="c" style="left:50.53px;letter-spacing:0px">4</div>
<div class="c" style="left:91.1px;letter-spacing:0.176px">Viên chức</div>
<div class="c" style="left:277.85px;letter-spacing:0.687px">SHCB0031</div>
<div class="c" style="left:451.92px;letter-spacing:0.408px">Lê Thị Mai</div>
<div class="c" style="left:639.52px;letter-spacing:-0.11px">Nữ</div>
<div class="c" style="left:827.6px;letter-spacing:1.639px">10/03/1970</div>
<div class="c" style="left:1015.2px;letter-spacing:0.175px">123, Phường Cầu...</div>
<div class="c" style="left:1389.62px;letter-spacing:0.035px">Bí thư đoàn trường</div>
<div class="c" style="left:1577.42px;letter-spacing:0.993px">Phòng</div>
</div>
<div class="row" style="top:379px">
<div class="c" style="left:50.25px;letter-spacing:0px">5</div>
<div class="c" style="left:90.28px;letter-spacing:0.333px">Công chức</div>
<div class="c" style="left:277.85px;letter-spacing:0.412px">SHCBA10</div>
<div class="c" style="left:451.92px;letter-spacing:0.175px">Mai Thị Tân</div>
<div class="c" style="left:639.52px;letter-spacing:-0.11px">Nữ</div>
<div class="c" style="left:827.6px;letter-spacing:1.67px">15/10/1988</div>
<div class="c" style="left:1016.02px;letter-spacing:0.18px">Thành phố Hà Nộ...</div>
<div class="c" style="left:1201.92px;letter-spacing:0.238px">Phó trưởng phòng</div>
<div class="c" style="left:1577.42px;letter-spacing:0.993px">Phòng</div>
</div>
<div class="row" style="top:420px">
<div class="c" style="left:49.98px;letter-spacing:0px">6</div>
<div class="c" style="left:90.28px;letter-spacing:0.333px">Công chức</div>
<div class="c" style="left:277.85px;letter-spacing:0.342px">SHCBA35</div>
<div class="c" style="left:451.92px;letter-spacing:0.433px">Nguyễn Ngọc Th...</div>
<div class="c" style="left:639.52px;letter-spacing:0.813px">Nam</div>
<div class="c" style="left:827.6px;letter-spacing:1.67px">15/08/1979</div>
<div class="c" style="left:1390.17px;letter-spacing:0.357px">Chuyên viên</div>
<div class="c" style="left:1577.42px;letter-spacing:0.993px">Phòng</div>
</div>
<div class="row" style="top:461px">
<div class="c" style="left:49.98px;letter-spacing:0px">7</div>
<div class="c" style="left:90.28px;letter-spacing:0.333px">Công chức</div>
<div class="c" style="left:277.85px;letter-spacing:0.392px">SHCBA09</div>
<div class="c" style="left:451.92px;letter-spacing:0.183px">Lại Thị Thực</div>
<div class="c" style="left:639.52px;letter-spacing:-0.11px">Nữ</div>
<div class="c" style="left:828.15px;letter-spacing:1.578px">01/02/1980</div>
<div class="c" style="left:1201.92px;letter-spacing:0.238px">Phó trưởng phòng</div>
<div class="c" style="left:1577.42px;letter-spacing:0.993px">Phòng</div>
</div>
<div class="row" style="top:502px">
<div class="c" style="left:50.25px;letter-spacing:0px">8</div>
<div class="c" style="left:91.1px;letter-spacing:0.176px">Viên chức</div>
<div class="c" style="left:277.85px;letter-spacing:0.485px">SHCBVC0001</div>
<div class="c" style="left:453.02px;letter-spacing:0.139px">Trần Hải Đăng</div>
<div class="c" style="left:639.52px;letter-spacing:0.813px">Nam</div>
<div class="c" style="left:827.6px;letter-spacing:1.67px">15/07/1975</div>
<div class="c" style="left:1014.92px;letter-spacing:0.277px">Bệnh viện quân đ...</div>
<div class="c" style="left:1203.02px;letter-spacing:-0.14px">Tổ trưởng</div>
<div class="c" style="left:1577.42px;letter-spacing:0.993px">Phòng</div>
</div>
<div class="row" style="top:543px">
<div class="c" style="left:49.98px;letter-spacing:0px">9</div>
<div class="c" style="left:91.1px;letter-spacing:0.176px">Viên chức</div>
<div class="c" style="left:277.85px;letter-spacing:0.687px">SHCB0022</div>
<div class="c" style="left:453.02px;letter-spacing:-0.105px">Trần Văn Nhượng</div>
<div class="c" style="left:639.52px;letter-spacing:0.813px">Nam</div>
<div class="c" style="left:827.6px;letter-spacing:1.67px">15/03/1958</div>
<div class="c" style="left:1015.2px;letter-spacing:0.114px">123, Phường Ba ...</div>
<div class="c" style="left:1390.17px;letter-spacing:0.357px">Chuyên viên</div>
<div class="c" style="left:1577.42px;letter-spacing:0.993px">Phòng</div>
</div>
<div class="row" style="top:584px">
<div class="c" style="left:37.7px;letter-spacing:2.162px">10</div>
<div class="c" style="left:90.28px;letter-spacing:0.277px">Cán bộ</div>
<div class="c" style="left:277.85px;letter-spacing:0.517px">SHCB052</div>
<div class="c" style="left:451.92px;letter-spacing:-0.086px">Hà Văn Chương</div>
<div class="c" style="left:639.52px;letter-spacing:0.813px">Nam</div>
<div class="c" style="left:827.88px;letter-spacing:1.639px">26/03/1961</div>
<div class="c" style="left:1015.2px;letter-spacing:0.175px">123, Phường Cầu...</div>
<div class="c" style="left:1389.62px;letter-spacing:0.401px">Nhân viên</div>
<div class="c" style="left:1577.42px;letter-spacing:0.993px">Phòng</div>
</div>
<div style="position:absolute;left:0;top:823px;width:1627px;height:7px;background:#f5f5f5"></div>
<div style="position:absolute;left:0;top:823px;width:658.500px;height:7px;background:#cbcbcb;border-radius:3.500px"></div>
<div class="t" style="left:21.73px;top:845.3px;letter-spacing:0.354px;">Tổng số:</div>
<div class="t" style="left:96.2px;top:845.3px;letter-spacing:2.537px;font-weight:700;">40</div>
<div class="t" style="left:1134.95px;top:848.3px;letter-spacing:0.539px;">Số dòng/trang</div>
<div class="sel2" style="left:1266.4px;top:835px;width:81.300px;height:39.600px"></div>
<div class="t" style="left:1282.5px;top:846.1px;letter-spacing:2.262px;">10</div>
<svg style="left:1324px;top:851px" width="12" height="8.500" viewBox="0 0 12 8.500" fill="none" stroke="#444" stroke-width="1.700" stroke-linecap="round" stroke-linejoin="round"><path d="M1 1.200L6 7l5-5.800"/></svg>
<div class="t" style="left:1372.1px;top:844.6px;letter-spacing:0px;font-weight:700;">1</div>
<div class="t" style="left:1391.65px;top:844.6px;letter-spacing:0px;">-</div>
<div class="t" style="left:1404.7px;top:844.6px;letter-spacing:3.137px;font-weight:700;">10</div>
<svg style="left:1454.7px;top:848.4px" width="9.500" height="14.200" viewBox="0 0 9.500 14.200" fill="#c6c6c6"><rect x="0" y="0" width="2.600" height="14.200"/><path d="M9.500 0v14.200L2.400 7.100z"/></svg>
<svg style="left:1496.0px;top:848.4px" width="14" height="14.200" viewBox="0 0 14 14.200" fill="#c6c6c6"><path d="M7.200 0v14.200L0 7.100zM14 0v14.200L6.800 7.100z"/></svg>
<svg style="left:1538.0px;top:848.4px" width="14" height="14.200" viewBox="0 0 14 14.200" fill="#6f6f6f"><path d="M0 0v14.200l7.200-7.100zM6.800 0v14.200L14 7.100z"/></svg>
<svg style="left:1583.4px;top:848.4px" width="9.800" height="14.200" viewBox="0 0 9.800 14.200" fill="#6f6f6f"><rect x="7.200" y="0" width="2.600" height="14.200"/><path d="M0 0v14.200l7.400-7.100z"/></svg>
</div>
<div style="position:absolute;left:1901px;top:478px;width:20px;height:119.500px;background:#4463ee;border-radius:5px 0 0 5px"></div>
<svg style="left:1906.500px;top:531px" width="8" height="13" viewBox="0 0 8 13" fill="none" stroke="#fff" stroke-width="2" stroke-linecap="round" stroke-linejoin="round"><path d="M6.800 1.200L1.500 6.500l5.300 5.300"/></svg>
<div id="sline"></div>
<div id="frame"></div>
</body>
</html>
